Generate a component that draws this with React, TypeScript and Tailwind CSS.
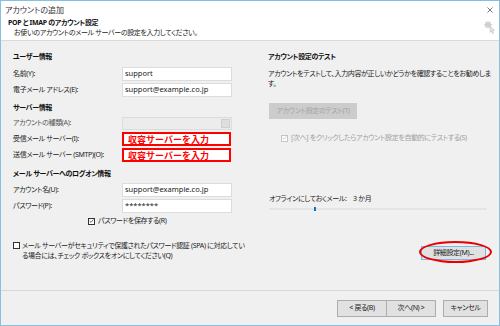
import React from "react";

const font = "font-['Noto_Sans','Noto_Sans_CJK_JP',sans-serif] [font-feature-settings:'palt']";
// 本文用の小さい文字
const small = "text-[7px] tracking-[-0.35px]";

function Field({ label, value }: { label: string; value?: string }) {
    return (
        <div className="flex items-center h-[14px]">
            <div className={"w-[109px] text-[#222] whitespace-nowrap " + small}>{label}</div>
            <div className="w-[110px] h-[14px] bg-white border border-[#dcdcdc] flex items-center px-[2px] text-[7.5px] text-[#1a1a1a]">
                {value}
            </div>
        </div>
    );
}

function RedField({ label }: { label: string }) {
    return (
        <div className="flex items-center h-[14px]">
            <div className={"w-[109px] text-[#222] whitespace-nowrap " + small}>{label}</div>
            <div className="w-[109px] h-[14px] bg-white border-2 border-[#f00] flex items-center pl-[4px] text-[9px] font-bold text-[#f00] [font-feature-settings:normal] leading-none">
                収容サーバーを入力
            </div>
        </div>
    );
}

function Check({ checked, disabled }: { checked?: boolean; disabled?: boolean }) {
    return (
        <div className={"w-[7px] h-[7px] border bg-white flex items-center justify-center shrink-0 " + (disabled ? "border-[#c4c4c4]" : "border-[#333]")}>
            {checked && (
                <svg width="6" height="6" viewBox="0 0 6 6">
                    <path d="M0.8 3 L2.4 4.6 L5.3 1.2" fill="none" stroke={disabled ? "#bbb" : "#333"} strokeWidth="0.9" />
                </svg>
            )}
        </div>
    );
}

export default function App() {
    return (
        <div className={"w-[500px] h-[326px] border border-[#86c0e0] bg-[#f0f0f0] flex flex-col " + font}>
            {/* タイトル + ヘッダー */}
            <div className="h-[40px] bg-white border-b border-[#dadada] relative">
                <div className="flex items-center justify-between h-[17px] pl-[4px] pr-[6px]">
                    <span className="text-[8px] text-[#333]">アカウントの追加</span>
                    <svg width="6" height="6" viewBox="0 0 6 6">
                        <path d="M0.5 0.5 L5.5 5.5 M5.5 0.5 L0.5 5.5" stroke="#555" strokeWidth="0.8" />
                    </svg>
                </div>
                <div className={"pl-[7px] font-bold text-[#111] leading-[10px] " + small}>POP と IMAP のアカウント設定</div>
                <div className={"pl-[13px] text-[#222] leading-[9px] " + small}>お使いのアカウントのメール サーバーの設定を入力してください。</div>
                {/* 右上のアイコン */}
                <svg className="absolute right-[4px] top-[19px]" width="11" height="14" viewBox="0 0 11 14">
                    <path d="M4 0.5 L5 2.5 L7.2 1.6 L6.6 3.8 L8.7 4.8 L6.6 5.8 L7.2 8 L5 7.1 L4 9 L3 7.1 L0.8 8 L1.4 5.8 L-0.5 4.8 L1.4 3.8 L0.8 1.6 L3 2.5 Z" fill="#d0d0d0" />
                    <path d="M6 6 L6 12.5 L7.5 11 L8.6 13.5 L9.6 13 L8.5 10.6 L10.4 10.4 Z" fill="#e4e4e4" stroke="#b8b8b8" strokeWidth="0.5" />
                </svg>
            </div>

            <div className="h-[249px] flex">
                {/* 左側 */}
                <div className="w-[250px] pl-[12px] pt-[10px] flex flex-col">
                    <div className={"h-[12px] leading-[12px] font-bold text-[#111] " + small}>ユーザー情報</div>
                    <div className="mt-[4px] flex flex-col gap-[2px]">
                        <Field label="名前(Y):" value="support" />
                        <Field label="電子メール アドレス(E):" value="support@example.co.jp" />
                    </div>
                    <div className={"mt-[5px] h-[12px] leading-[12px] font-bold text-[#111] " + small}>サーバー情報</div>
                    <div className="mt-[2px] flex flex-col gap-[2px]">
                        <div className="flex items-center h-[14px]">
                            <div className={"w-[109px] text-[#555] " + small}>アカウントの種類(A):</div>
                            <div className="w-[110px] h-[13px] bg-[#ececec] border border-[#dcdcdc] flex justify-end items-center pr-[1px]">
                                <div className="w-[9px] h-[9px] bg-[#dedede] border border-[#d0d0d0]" />
                            </div>
                        </div>
                        <RedField label="受信メール サーバー(I):" />
                        <RedField label="送信メール サーバー (SMTP)(O):" />
                    </div>
                    <div className={"mt-[6px] h-[12px] leading-[12px] font-bold text-[#111] " + small}>メール サーバーへのログオン情報</div>
                    <div className="mt-[3px] flex flex-col gap-[2px]">
                        <Field label="アカウント名(U):" value="support@example.co.jp" />
                        <Field label="パスワード(P):" value="********" />
                    </div>
                    <div className={"mt-[3px] h-[10px] flex items-center gap-[3px] pl-[75px] text-[#222] " + small}>
                        <Check checked />
                        <span>パスワードを保存する(R)</span>
                    </div>
                    <div className={"mt-[15px] flex gap-[2px] text-[#222] leading-[10px] " + small}>
                        <div className="pt-[1px]">
                            <Check />
                        </div>
                        <div className="w-[224px]">
                            メール サーバーがセキュリティで保護されたパスワード認証 (SPA) に対応している場合には、チェック ボックスをオンにしてください(Q)
                        </div>
                    </div>
                </div>

                {/* 右側 */}
                <div className="w-[248px] pl-[17px] pr-[12px] pt-[10px] flex flex-col">
                    <div className={"h-[12px] leading-[12px] font-bold text-[#111] " + small}>アカウント設定のテスト</div>
                    <div className={"mt-[6px] text-[#222] leading-[10px] whitespace-nowrap " + small}>
                        アカウントをテストして、入力内容が正しいかどうかを確認することをお勧めしま
                        <br />す。
                    </div>
                    <div className={"mt-[14px] ml-[1px] w-[88px] h-[16px] bg-[#cccccc] flex items-center justify-center text-[#a3a3a3] whitespace-nowrap " + small}>
                        アカウント設定のテスト(T)
                    </div>
                    <div className={"mt-[14px] h-[10px] ml-[13px] flex items-center gap-[3px] text-[#a0a0a0] whitespace-nowrap " + small}>
                        <Check checked disabled />
                        <span>[次へ] をクリックしたらアカウント設定を自動的にテストする(S)</span>
                    </div>
                    <div className={"mt-[51px] ml-[1px] h-[10px] leading-[10px] text-[#222] " + small}>
                        オフラインにしておくメール:　3 か月
                    </div>
                    <div className="mt-[4px] ml-[1px] w-[218px] h-[2px] bg-[#e4e4e4] relative">
                        <div className="absolute left-[45px] -top-[1px] w-[2px] h-[4px] bg-[#0078d7]" />
                    </div>
                    <div className="mt-[36px] flex justify-end relative">
                        <div className={"w-[65px] h-[14px] mr-[1px] bg-[#e1e1e1] border border-[#7eb4ea] flex items-center justify-center text-[#222] " + small}>
                            詳細設定(M)...
                        </div>
                        {/* 赤い丸の注釈 */}
                        <div className="absolute -right-[5px] -top-[5px] w-[73px] h-[22px] rounded-[50%] border-2 border-[#e60000]" />
                    </div>
                </div>
            </div>

            {/* 下部ボタン */}
            <div className={"flex-1 border-t border-[#d8d8d8] flex items-start justify-end pt-[9px] pr-[11px] text-[#222] " + small}>
                <div className="w-[50px] h-[17px] bg-[#e1e1e1] border border-[#adadad] flex items-center justify-center">&lt; 戻る(B)</div>
                <div className="w-[49px] h-[17px] bg-[#e1e1e1] border border-l-0 border-[#adadad] flex items-center justify-center">次へ(N) &gt;</div>
                <div className="ml-[7px] w-[45px] h-[17px] bg-[#e1e1e1] border border-[#adadad] flex items-center justify-center">キャンセル</div>
            </div>
        </div>
    );
}
